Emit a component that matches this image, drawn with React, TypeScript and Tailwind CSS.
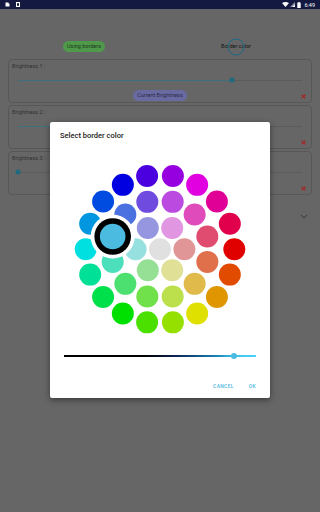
const hsv = (h: number, s: number, v: number) => {
  const f = (n: number) => {
    const k = (n + h / 60) % 6
    return Math.round(255 * (v - v * s * Math.max(0, Math.min(k, 4 - k, 1))))
  }
  return `rgb(${f(5)},${f(3)},${f(1)})`
}

const rings = [
  { r: 0, n: 1, s: 0, offset: 0 },
  { r: 24.4, n: 6, s: 1 / 3, offset: 0 },
  { r: 49, n: 12, s: 2 / 3, offset: 15 },
  { r: 74.3, n: 18, s: 1, offset: 0 }
]

const CX = 90
const CY = 89.2
const SELECTED = { ring: 2, angle: 165 }

const ColorWheel = () => {
  const dots = rings.flatMap((ring, i) =>
    Array.from({ length: ring.n }, (_, k) => {
      const a = ring.offset + (k * 360) / ring.n
      const rad = (a * Math.PI) / 180
      return {
        key: `${i}-${k}`,
        x: CX + ring.r * Math.cos(rad),
        y: CY - ring.r * Math.sin(rad),
        color: hsv((360 - a) % 360, ring.s, 0.88),
        selected: i === SELECTED.ring && a === SELECTED.angle
      }
    })
  )
  const sel = dots.find((d) => d.selected)!

  return (
    <svg width="180" height="180" viewBox="0 0 180 180" className="mx-auto block">
      {dots.map((d) => (
        <circle key={d.key} cx={d.x} cy={d.y} r="11" fill={d.color} />
      ))}
      <circle cx={sel.x} cy={sel.y} r="22" fill="#ffffff" />
      <circle cx={sel.x} cy={sel.y} r="18.3" fill="#000000" />
      <circle cx={sel.x} cy={sel.y} r="12.8" fill={sel.color} />
    </svg>
  )
}

const StatusBar = () => (
  <div className="flex h-[9px] items-center bg-[#131940] px-[5px] text-white">
    <svg width="5" height="5" viewBox="0 0 5 5" className="block">
      <path d="M0.5 0.5h2.6l1.4 1.4v2.6h-4z" fill="#fff" />
    </svg>
    <svg width="4" height="5" viewBox="0 0 4 5" className="ml-[6px] block">
      <rect x="0" y="0" width="4" height="5" fill="#fff" />
      <rect x="1" y="1.2" width="2" height="2.6" fill="#131940" />
    </svg>
    <div className="ml-auto flex items-center gap-[1px]">
      <svg width="7" height="5" viewBox="0 0 7 5" className="block">
        <path d="M0 1 Q3.5 -1 7 1 L3.5 5z" fill="#fff" />
      </svg>
      <svg width="5" height="5" viewBox="0 0 5 5" className="block">
        <path d="M5 0 V5 H0z" fill="#fff" opacity="0.55" />
        <path d="M5 2.5 V5 H2.5z" fill="#fff" />
      </svg>
      <svg width="4" height="6" viewBox="0 0 4 6" className="ml-[1px] block">
        <rect x="0.3" y="0.6" width="3.4" height="5.4" fill="#fff" />
        <rect x="1.2" y="0" width="1.6" height="0.8" fill="#fff" />
      </svg>
      <span className="ml-[2px] text-[5.5px] leading-[6px]">6:49</span>
    </div>
  </div>
)

const BrightnessCard = ({ label, value }: { label: string; value: number }) => (
  <div className="mx-[8px] flex h-[44px] flex-col rounded-[4px] border border-[#575757]">
    <div className="pl-[3px] pt-[3px] text-[5.5px] leading-[7px] text-[#333333]">{label}</div>
    <div className="mx-[9px] mt-[7px] flex h-[6px] items-center">
      <div className="relative h-[1px] w-full bg-[#5b5b5b]">
        <div className="h-full bg-[#3e6f7e]" style={{ width: `${value}%` }} />
        <div
          className="absolute top-1/2 h-[5px] w-[5px] -translate-x-1/2 -translate-y-1/2 rounded-full bg-[#1f6a82]"
          style={{ left: `${value}%` }}
        />
      </div>
    </div>
    <div className="relative mt-[7px] flex h-[11px] items-center justify-center">
      <span className="rounded-full bg-[#6a6aa2] px-[4px] text-[5.5px] leading-[11px] text-[#2a2a4a]">
        Current Brightness
      </span>
      <svg width="5" height="5" viewBox="0 0 5 5" className="absolute right-[5px] top-[3.5px] block">
        <path d="M0.6 0.6 L4.4 4.4 M4.4 0.6 L0.6 4.4" stroke="#a82222" strokeWidth="1.2" />
      </svg>
    </div>
  </div>
)

export default function App() {
  return (
    <div className="relative h-[512px] w-[320px] overflow-hidden bg-[#666666] [font-family:Roboto,sans-serif]">
      <StatusBar />

      <div className="mt-[32px] flex h-[11px] items-center">
        <span className="ml-[63px] rounded-full bg-[#4f994b] px-[4px] text-[5.5px] leading-[11px] text-[#1d3a1c]">
          Using borders
        </span>
        <span className="relative ml-[116px] text-[5.5px] leading-[11px] text-[#141414]">
          Border color
          <span className="absolute left-[15px] top-1/2 h-[17px] w-[17px] -translate-x-1/2 -translate-y-1/2 rounded-full border-[1.5px] border-[#1c6a86]" />
        </span>
      </div>

      <div className="mt-[7px] flex flex-col gap-[2px]">
        <BrightnessCard label="Brightness 1 :" value={75.4} />
        <BrightnessCard label="Brightness 2 :" value={40} />
        <BrightnessCard label="Brightness 3 :" value={0} />
      </div>

      <div className="mr-[12px] mt-[19px] flex justify-end">
        <svg width="8" height="5" viewBox="0 0 8 5" className="block">
          <path d="M1 1 L4 4 L7 1" stroke="#333" strokeWidth="1" fill="none" />
        </svg>
      </div>

      <div className="absolute left-[50px] top-[122px] flex h-[276px] w-[220px] flex-col rounded-[2px] bg-white shadow-[0_2px_6px_rgba(0,0,0,0.45)]">
        <div className="pl-[10px] pt-[9px] text-[7.5px] font-medium leading-[10px] text-[#212121]">
          Select border color
        </div>

        <div className="mt-[19px]">
          <ColorWheel />
        </div>

        <div className="ml-[14px] mt-[12px] flex h-[8px] w-[192px] items-center">
          <div className="relative h-[1.5px] w-full bg-[linear-gradient(to_right,#000000_0%,#000000_42%,#0b2455_58%,#1a86b8_80%,#3fc4ee_88.5%,#45d2fa_100%)]">
            <div className="absolute left-[88.5%] top-1/2 h-[6px] w-[6px] -translate-x-1/2 -translate-y-1/2 rounded-full bg-[#4bbbe0]" />
          </div>
        </div>

        <div className="mr-[14px] mt-[22px] flex items-center justify-end gap-[15px] text-[5px] font-medium leading-[8px] tracking-[0.3px] text-[#4bb8e0]">
          <span>CANCEL</span>
          <span>OK</span>
        </div>
      </div>
    </div>
  )
}
